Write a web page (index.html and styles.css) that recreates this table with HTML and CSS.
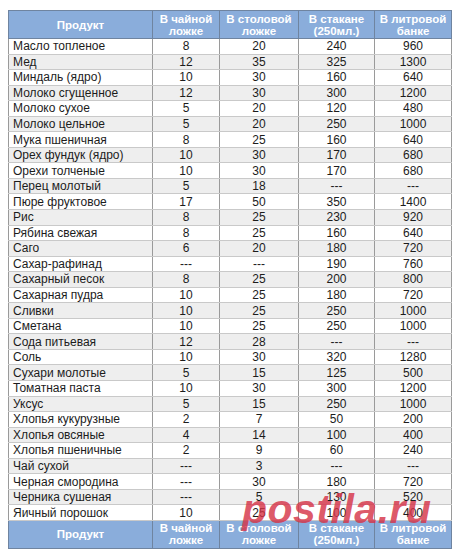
FILE: index.html
```html
<!DOCTYPE html>
<html>
<head>
<meta charset="utf-8">
<link rel="stylesheet" href="styles.css">
</head>
<body>
<div class="wrap">
<table class="tbl">
<colgroup><col class="c1"><col class="c2"><col class="c3"><col class="c4"><col class="c5"></colgroup>
<thead>
<tr><th>Продукт</th><th>В чайной<br>ложке</th><th>В столовой<br>ложке</th><th>В стакане<br>(250мл.)</th><th>В литровой<br>банке</th></tr>
</thead>
<tbody>
<tr><td>Масло топленое</td><td>8</td><td>20</td><td>240</td><td>960</td></tr>
<tr><td>Мед</td><td>12</td><td>35</td><td>325</td><td>1300</td></tr>
<tr><td>Миндаль (ядро)</td><td>10</td><td>30</td><td>160</td><td>640</td></tr>
<tr><td>Молоко сгущенное</td><td>12</td><td>30</td><td>300</td><td>1200</td></tr>
<tr><td>Молоко сухое</td><td>5</td><td>20</td><td>120</td><td>480</td></tr>
<tr><td>Молоко цельное</td><td>5</td><td>20</td><td>250</td><td>1000</td></tr>
<tr><td>Мука пшеничная</td><td>8</td><td>25</td><td>160</td><td>640</td></tr>
<tr><td>Орех фундук (ядро)</td><td>10</td><td>30</td><td>170</td><td>680</td></tr>
<tr><td>Орехи толченые</td><td>10</td><td>30</td><td>170</td><td>680</td></tr>
<tr><td>Перец молотый</td><td>5</td><td>18</td><td>---</td><td>---</td></tr>
<tr><td>Пюре фруктовое</td><td>17</td><td>50</td><td>350</td><td>1400</td></tr>
<tr><td>Рис</td><td>8</td><td>25</td><td>230</td><td>920</td></tr>
<tr><td>Рябина свежая</td><td>8</td><td>25</td><td>160</td><td>640</td></tr>
<tr><td>Саго</td><td>6</td><td>20</td><td>180</td><td>720</td></tr>
<tr><td>Сахар-рафинад</td><td>---</td><td>---</td><td>190</td><td>760</td></tr>
<tr><td>Сахарный песок</td><td>8</td><td>25</td><td>200</td><td>800</td></tr>
<tr><td>Сахарная пудра</td><td>10</td><td>25</td><td>180</td><td>720</td></tr>
<tr><td>Сливки</td><td>10</td><td>25</td><td>250</td><td>1000</td></tr>
<tr><td>Сметана</td><td>10</td><td>25</td><td>250</td><td>1000</td></tr>
<tr><td>Сода питьевая</td><td>12</td><td>28</td><td>---</td><td>---</td></tr>
<tr><td>Соль</td><td>10</td><td>30</td><td>320</td><td>1280</td></tr>
<tr><td>Сухари молотые</td><td>5</td><td>15</td><td>125</td><td>500</td></tr>
<tr><td>Томатная паста</td><td>10</td><td>30</td><td>300</td><td>1200</td></tr>
<tr><td>Уксус</td><td>5</td><td>15</td><td>250</td><td>1000</td></tr>
<tr><td>Хлопья кукурузные</td><td>2</td><td>7</td><td>50</td><td>200</td></tr>
<tr><td>Хлопья овсяные</td><td>4</td><td>14</td><td>100</td><td>400</td></tr>
<tr><td>Хлопья пшеничные</td><td>2</td><td>9</td><td>60</td><td>240</td></tr>
<tr><td>Чай сухой</td><td>---</td><td>3</td><td>---</td><td>---</td></tr>
<tr><td>Черная смородина</td><td>---</td><td>30</td><td>180</td><td>720</td></tr>
<tr><td>Черника сушеная</td><td>---</td><td>5</td><td>130</td><td>520</td></tr>
<tr><td>Яичный порошок</td><td>10</td><td>25</td><td>100</td><td>400</td></tr>
</tbody>
<tfoot>
<tr><th>Продукт</th><th>В чайной<br>ложке</th><th>В столовой<br>ложке</th><th>В стакане<br>(250мл.)</th><th>В литровой<br>банке</th></tr>
</tfoot>
</table>
<div class="watermark">postila.ru</div>
</div>
</body>
</html>
```

FILE: styles.css
```css
html, body {
  margin: 0;
  padding: 0;
  background: #fff;
}
body {
  padding: 10px 0 0 8px;
  font-family: "Liberation Sans", Arial, sans-serif;
}
.wrap {
  position: relative;
  width: 443px;
}
.tbl {
  border-collapse: collapse;
  table-layout: fixed;
  width: 443px;
  font-size: 12px;
  color: #1c1c1c;
  border: 1px solid #9aa3ad;
}
.c1 { width: 144px; }
.c2 { width: 67px; }
.c3 { width: 79px; }
.c4 { width: 76px; }
.c5 { width: 77px; }
.tbl th {
  background: #8aaddb;
  color: #fff;
  font-weight: bold;
  font-size: 11.5px;
  line-height: 12px;
  height: 27px;
  padding: 0;
  border: 1px solid #6f84a0;
  text-align: center;
  vertical-align: middle;
  white-space: nowrap;
  overflow: hidden;
}
.tbl td {
  height: 14.55px;
  padding: 0;
  line-height: 14px;
  border-top: 1px solid #c9c9c9;
  border-bottom: 1px solid #c9c9c9;
  border-left: 1px solid #9a9a9a;
  border-right: 1px solid #9a9a9a;
  text-align: center;
  white-space: nowrap;
  overflow: hidden;
}
.tbl td:first-child {
  text-align: left;
  padding-left: 4px;
}
.tbl tbody tr:nth-child(even) td {
  background: #eeeeee;
}
.watermark {
  position: absolute;
  left: 234px;
  top: 476px;
  font-family: "Liberation Sans", Arial, sans-serif;
  font-weight: bold;
  font-style: italic;
  font-size: 41px;
  letter-spacing: 0.5px;
  color: rgba(214, 52, 72, 0.82);
  line-height: 46px;
  pointer-events: none;
}
```
